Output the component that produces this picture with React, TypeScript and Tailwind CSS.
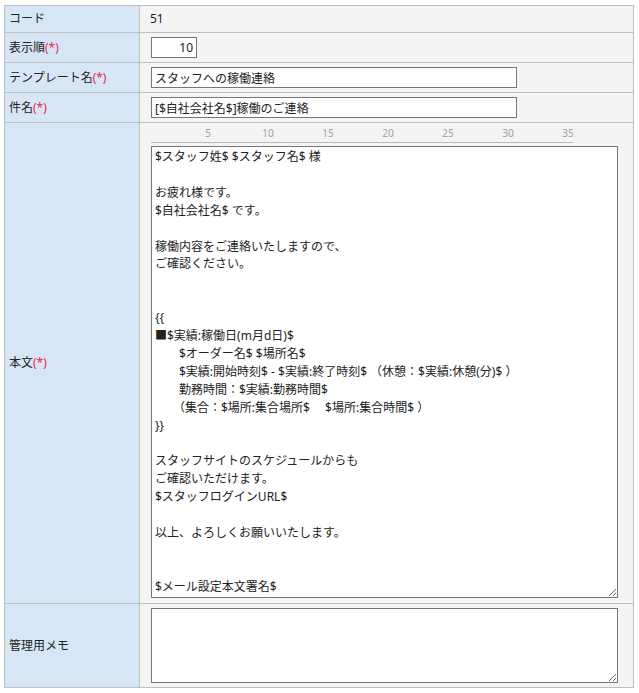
import React from "react";

const FONT = {
  fontFamily: '"Noto Sans", "Noto Sans CJK JP", sans-serif',
};

const BODY = [
  "$スタッフ姓$ $スタッフ名$ 様",
  "",
  "お疲れ様です。",
  "$自社会社名$ です。",
  "",
  "稼働内容をご連絡いたしますので、",
  "ご確認ください。",
  "",
  "",
  "{{",
  "■$実績:稼働日(m月d日)$",
  "　　$オーダー名$ $場所名$",
  "　　$実績:開始時刻$ - $実績:終了時刻$ （休憩：$実績:休憩(分)$ ）",
  "　　勤務時間：$実績:勤務時間$",
  "　　（集合：$場所:集合場所$　 $場所:集合時間$ ）",
  "}}",
  "",
  "スタッフサイトのスケジュールからも",
  "ご確認いただけます。",
  "$スタッフログインURL$",
  "",
  "以上、よろしくお願いいたします。",
  "",
  "",
  "$メール設定本文署名$",
].join("\n");

function Req() {
  return <span className="text-[#ee2255]">(*)</span>;
}

function Row({
  label,
  h,
  children,
}: {
  label: React.ReactNode;
  h: string;
  children: React.ReactNode;
}) {
  return (
    <div className={`flex ${h}`}>
      <div className="w-[135px] shrink-0 flex items-center pl-[4px] bg-[#d6e6f4] border-r border-b border-[#c0c0c0]">
        {label}
      </div>
      <div className="flex-1 pl-[10px] bg-[#f4f4f4] border-r border-b border-[#c0c0c0]">
        {children}
      </div>
    </div>
  );
}

const inputCls =
  "h-[21px] ml-px bg-white border border-[#767676] px-[3px] text-[12px] text-[#222] outline-none";

export default function App() {
  const marks = [5, 10, 15, 20, 25, 30, 35];
  return (
    <div
      className="min-h-screen bg-white pt-[5px] pl-[4px] text-[12px] text-[#222]"
      style={FONT}
    >
      <div className="w-[630px] border-l border-t border-[#c0c0c0]">
        <Row label="コード" h="h-[27px]">
          <div className="h-full flex items-center">51</div>
        </Row>
        <Row
          label={
            <>
              表示順
              <Req />
            </>
          }
          h="h-[30px]"
        >
          <div className="h-full flex items-center">
            <input className={`${inputCls} w-[46px] text-right`} defaultValue="10" />
          </div>
        </Row>
        <Row
          label={
            <>
              テンプレート名
              <Req />
            </>
          }
          h="h-[30px]"
        >
          <div className="h-full flex items-center">
            <input
              className={`${inputCls} w-[366px]`}
              defaultValue="スタッフへの稼働連絡"
            />
          </div>
        </Row>
        <Row
          label={
            <>
              件名
              <Req />
            </>
          }
          h="h-[30px]"
        >
          <div className="h-full flex items-center">
            <input
              className={`${inputCls} w-[366px]`}
              defaultValue="[$自社会社名$]稼働のご連絡"
            />
          </div>
        </Row>
        <Row
          label={
            <>
              本文
              <Req />
            </>
          }
          h="h-[481px]"
        >
          <div className="ml-px w-[422px] h-[20px] border-b border-[#bbbbbb] flex text-[10px] leading-none text-[#a0a0a0]">
            <div className="w-[27px] shrink-0" />
            {marks.map((m) => (
              <div key={m} className="w-[60px] shrink-0 text-center pt-[5px]">
                {m}
              </div>
            ))}
          </div>
          <textarea
            className="block mt-[3px] ml-px w-[467px] h-[452px] bg-white border border-[#767676] px-[3px] py-[1px] text-[12px] leading-[17.9px] text-[#222] outline-none overflow-hidden"
            defaultValue={BODY}
          />
        </Row>
        <Row label="管理用メモ" h="h-[84px]">
          <textarea className="block mt-[4px] ml-px w-[467px] h-[75px] bg-white border border-[#767676] px-[3px] py-[1px] text-[12px] outline-none overflow-hidden" />
        </Row>
      </div>
    </div>
  );
}
